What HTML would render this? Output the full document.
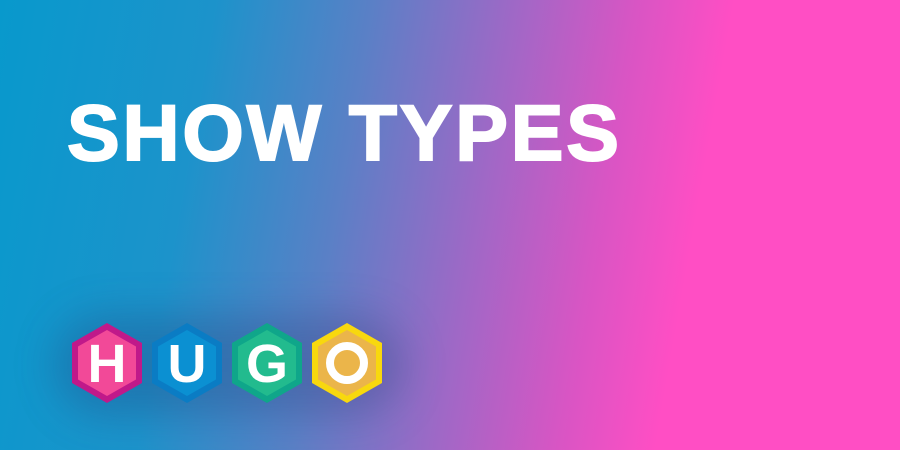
<!DOCTYPE html>
<html><head><style>
html,body{margin:0;padding:0}
body{width:900px;height:450px;overflow:hidden;position:relative;
background:linear-gradient(100deg,#0899cc 0%,#1c93cb 22%,#5a80c6 38%,#9c69c6 52%,#d855c4 65%,#ff4ec4 75%,#ff4ec4 100%);
font-family:"Liberation Sans",sans-serif}
.t{position:absolute;left:67px;top:88px;font-size:79px;font-weight:bold;color:#fff;-webkit-text-stroke:2px #fff;letter-spacing:2.8px;line-height:90px;white-space:nowrap}
.sh{position:absolute;left:55px;top:315px;width:350px;height:100px;border-radius:50px;background:rgba(40,50,110,0.28);filter:blur(20px)}
svg{position:absolute;left:0;top:0}
</style></head><body>
<div class="sh"></div>
<div class="t">SHOW TYPES</div>
<svg width="900" height="450">
<defs><polygon id="hx" points="0,-40 35,-20 35,20 0,40 -35,20 -35,-20"/><polygon id="hi" points="0,-33 29,-16.5 29,16.5 0,33 -29,16.5 -29,-16.5"/></defs>
<g transform="translate(107,363)"><use href="#hx" fill="#c0198a"/><use href="#hi" fill="#f24998"/>
<text x="0" y="19" font-size="54" font-weight="bold" fill="#fff" text-anchor="middle" font-family="Liberation Sans">H</text></g>
<g transform="translate(187,363)"><use href="#hx" fill="#0a7cc4"/><use href="#hi" fill="#0b90d2"/>
<text x="0" y="19" font-size="54" font-weight="bold" fill="#fff" text-anchor="middle" font-family="Liberation Sans">U</text></g>
<g transform="translate(267,363)"><use href="#hx" fill="#0fa68a"/><use href="#hi" fill="#22bb8e"/>
<text x="0" y="19" font-size="54" font-weight="bold" fill="#fff" text-anchor="middle" font-family="Liberation Sans">G</text></g>
<g transform="translate(347,363)"><use href="#hx" fill="#f8d80e"/><use href="#hi" fill="#ebb54a"/>
<circle cx="0" cy="0" r="17" fill="none" stroke="#fff" stroke-width="8"/></g>
</svg>
</body></html>
